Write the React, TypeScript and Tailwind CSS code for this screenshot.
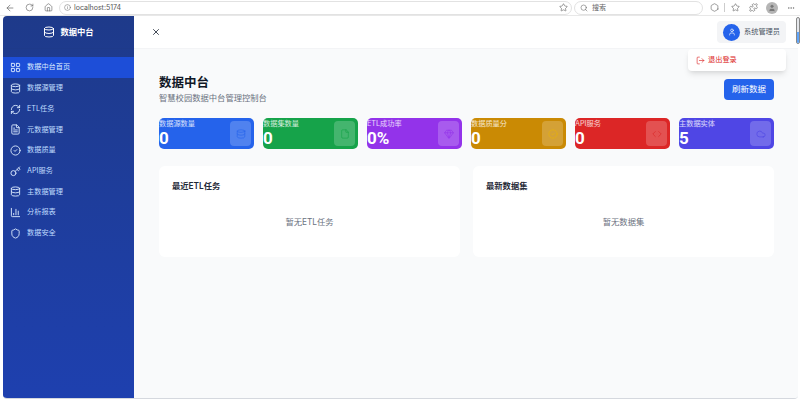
import { ArrowLeft, RotateCw, Home, Info, Star, Search, Hexagon, Puzzle, MoreHorizontal, LayoutGrid, Database, RefreshCw, FileText, CircleCheck, Key, ChartColumn, Shield, X, User, LogOut, Code, Cloud, Gem, File } from "lucide-react";

const menu = [
  { name: "数据中台首页", icon: LayoutGrid, active: true },
  { name: "数据源管理", icon: Database },
  { name: "ETL任务", icon: RefreshCw },
  { name: "元数据管理", icon: FileText },
  { name: "数据质量", icon: CircleCheck },
  { name: "API服务", icon: Key },
  { name: "主数据管理", icon: Database },
  { name: "分析报表", icon: ChartColumn },
  { name: "数据安全", icon: Shield },
];

const stats = [
  { label: "数据源数量", value: "0", icon: Database, bg: "bg-[#2563eb]", fg: "text-[#2563eb]" },
  { label: "数据集数量", value: "0", icon: File, bg: "bg-[#16a34a]", fg: "text-[#16a34a]" },
  { label: "ETL成功率", value: "0%", icon: Gem, bg: "bg-[#9333ea]", fg: "text-[#9333ea]" },
  { label: "数据质量分", value: "0", icon: CircleCheck, bg: "bg-[#ca8a04]", fg: "text-[#eab308]" },
  { label: "API服务", value: "0", icon: Code, bg: "bg-[#dc2626]", fg: "text-[#dc2626]" },
  { label: "主数据实体", value: "5", icon: Cloud, bg: "bg-[#4f46e5]", fg: "text-[#4f46e5]" },
];

const App = () => {
  return (
    <div className="w-[800px] h-[400px] overflow-hidden bg-white flex flex-col relative font-['Inter','Noto_Sans_CJK_SC',sans-serif]">
      {/* browser bar */}
      <div className="h-[16px] flex items-center shrink-0 text-[#555] bg-white border-b border-[#e8e8e8]">
        <ArrowLeft className="w-[10px] h-[10px] ml-[5px]" strokeWidth={1.5} />
        <RotateCw className="w-[9px] h-[9px] ml-[10px]" strokeWidth={1.5} />
        <Home className="w-[9px] h-[9px] ml-[10px]" strokeWidth={1.5} />
        <div className="ml-[6px] w-[513px] h-[14px] rounded-full border border-[#e2e2e2] flex items-center pl-[4px] pr-[3px]">
          <Info className="w-[7px] h-[7px]" strokeWidth={1.5} />
          <span className="ml-[3px] pt-[1px] text-[7px] text-[#555]">localhost:5174</span>
          <Star className="w-[9px] h-[9px] ml-auto" strokeWidth={1.5} />
        </div>
        <div className="ml-[2px] w-[129px] h-[14px] rounded-full border border-[#e2e2e2] flex items-center pl-[5px]">
          <Search className="w-[8px] h-[8px]" strokeWidth={1.5} />
          <span className="ml-[4px] pt-[1px] text-[7px] text-[#666]">搜索</span>
        </div>
        <Hexagon className="w-[9px] h-[9px] ml-[7px]" strokeWidth={1.5} />
        <div className="w-px h-[9px] bg-[#ccc] ml-[5px]" />
        <Star className="w-[9px] h-[9px] ml-[6px]" strokeWidth={1.5} />
        <Puzzle className="w-[9px] h-[9px] ml-[9px]" strokeWidth={1.5} />
        <div className="w-[12px] h-[12px] rounded-full bg-[#b5b5b5] ml-[8px] flex items-center justify-center">
          <User className="w-[8px] h-[8px] text-[#777]" fill="#777" strokeWidth={1} />
        </div>
        <MoreHorizontal className="w-[8px] h-[8px] ml-[9px]" strokeWidth={1.5} />
      </div>

      {/* app window */}
      <div className="flex flex-1 ml-[3px] mr-[2px] mb-[1px] rounded-b-[4px] rounded-tl-[4px] overflow-hidden border-b border-[#d5d8de]">
        <aside className="w-[131px] shrink-0 bg-gradient-to-b from-[#1e3a8a] to-[#1e40af] text-[#bfdbfe] flex flex-col">
          <div className="h-[33px] flex items-center justify-center gap-[5px] border-b border-[#1e3a8a] text-white">
            <Database className="w-[12px] h-[12px]" strokeWidth={2} />
            <span className="text-[8.3px] font-semibold">数据中台</span>
          </div>
          <nav className="mt-[8px] flex flex-col">
            {menu.map((item, idx) => {
              const Icon = item.icon;
              return (
                <div key={idx} className={`h-[20.7px] pt-[1px] flex items-center pl-[7px] gap-[6px] ${item.active ? "bg-[#1d4ed8] text-[#dbeafe]" : ""}`}>
                  <Icon className="w-[11px] h-[11px] text-[#dbeafe]" strokeWidth={2} />
                  <span className="text-[7.2px]">{item.name}</span>
                </div>
              );
            })}
          </nav>
        </aside>

        <div className="flex-1 flex flex-col bg-[#f9fafb] min-w-0">
          <header className="h-[33px] bg-white flex items-center justify-between pl-[17px] pr-[12px] shrink-0 border-b border-[#f3f4f6]">
            <X className="w-[10px] h-[10px] text-[#1f2937]" strokeWidth={2} />
            <div className="h-[22px] w-[69px] bg-[#f3f4f6] rounded-[4px] flex items-center pl-[6px] gap-[4px]">
              <div className="w-[17px] h-[17px] rounded-full bg-[#2563eb] flex items-center justify-center">
                <User className="w-[8px] h-[8px] text-white" strokeWidth={2} />
              </div>
              <span className="text-[7.2px] text-[#4b5563]">系统管理员</span>
            </div>
          </header>

          <main className="pl-[25px] pr-[24px] pt-[24.5px]">
            <div className="flex items-start justify-between">
              <div>
                <h1 className="text-[12.5px] leading-[17px] font-bold text-[#111827]">数据中台</h1>
                <p className="mt-[1.5px] text-[8.3px] leading-[12px] text-[#6b7280]">智慧校园数据中台管理控制台</p>
              </div>
              <button className="w-[50px] h-[21px] mt-[5.5px] rounded-[4px] bg-[#2563eb] text-white text-[8.5px]">刷新数据</button>
            </div>

            <div className="grid grid-cols-6 gap-[9px] mt-[14px]">
              {stats.map((s, idx) => {
                const Icon = s.icon;
                return (
                  <div key={idx} className={`${s.bg} h-[31px] rounded-[5px] text-white flex justify-between`}>
                    <div className="flex flex-col">
                      <span className="text-[7.2px] leading-[10px] mt-[1px] text-white/80">{s.label}</span>
                      <span className="font-['Roboto',sans-serif] text-[17px] leading-[17px] mt-[1px] font-bold">{s.value}</span>
                    </div>
                    <div className="w-[21px] h-[25px] mt-[3px] mr-[3px] rounded-[4px] bg-white/20 flex items-center justify-center">
                      <Icon className={`w-[10px] h-[10px] ${s.fg}`} strokeWidth={1.5} />
                    </div>
                  </div>
                );
              })}
            </div>

            <div className="grid grid-cols-2 gap-[13px] mt-[17px]">
              {[
                { title: "最近ETL任务", empty: "暂无ETL任务" },
                { title: "最新数据集", empty: "暂无数据集" },
              ].map((card, idx) => (
                <div key={idx} className="h-[91px] bg-white rounded-[6px] px-[13px] pt-[14px]">
                  <h2 className="text-[8.3px] leading-[12px] font-semibold text-[#1f2937]">{card.title}</h2>
                  <p className="mt-[24px] text-center text-[8.3px] leading-[12px] text-[#6b7280]">{card.empty}</p>
                </div>
              ))}
            </div>
          </main>
        </div>
      </div>

      {/* logout dropdown */}
      <div className="absolute left-[688px] top-[49px] w-[98px] h-[22px] bg-white rounded-[4px] shadow-md flex items-center pl-[8px] gap-[3px] text-[#dc2626]">
        <LogOut className="w-[9px] h-[9px]" strokeWidth={1.7} />
        <span className="text-[7.2px]">退出登录</span>
      </div>

      {/* scrollbar */}
      <div className="absolute right-0 top-[17px] w-[4px] h-[27px] rounded-full bg-[#e5e7eb] border border-[#888] overflow-hidden">
        <div className="mt-[14px] h-[12px] bg-[#60a5fa]" />
      </div>
    </div>
  );
};

export default App;
